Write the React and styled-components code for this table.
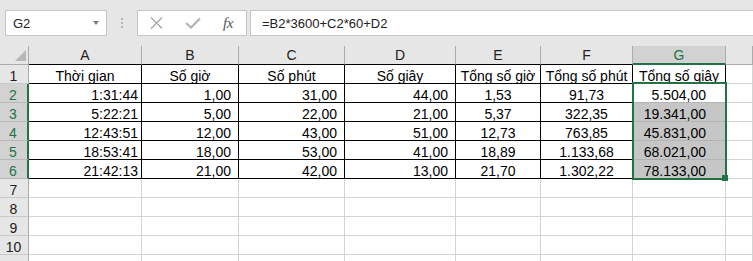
import styled, { createGlobalStyle } from 'styled-components';

const GlobalStyle = createGlobalStyle`
  html, body { margin: 0; padding: 0; background: #fff; }
  body { font-family: "Liberation Sans", Arial, sans-serif; }
`

const GREEN = '#217346'
const HEAD = '#e6e6e6'
const HEAD_ON = '#d2d2d2'
const GRID = '#d4d4d4'

const columns = ['A', 'B', 'C', 'D', 'E', 'F', 'G']
const titles = ['Thời gian', 'Số giờ', 'Số phút', 'Số giây', 'Tổng số giờ', 'Tổng số phút', 'Tổng số giây']
const data = [
  ['1:31:44', '1,00', '31,00', '44,00', '1,53', '91,73', '5.504,00'],
  ['5:22:21', '5,00', '22,00', '21,00', '5,37', '322,35', '19.341,00'],
  ['12:43:51', '12,00', '43,00', '51,00', '12,73', '763,85', '45.831,00'],
  ['18:53:41', '18,00', '53,00', '41,00', '18,89', '1.133,68', '68.021,00'],
  ['21:42:13', '21,00', '42,00', '13,00', '21,70', '1.302,22', '78.133,00'],
]
// how each column lines its values up
const layout = [
  {align: 'right', pad: 3},
  {align: 'right', pad: 7},
  {align: 'right', pad: 7},
  {align: 'right', pad: 7},
  {align: 'center', pad: 0},
  {align: 'center', pad: 0},
  {align: 'right', pad: 19},
]
const emptyRows = [7, 8, 9, 10, 11, 12]

export default function App() {
  return <Window>
    <GlobalStyle />
    <FormulaBar>
      <NameBox>
        <span>G2</span>
        <Caret />
      </NameBox>
      <Grip><i /><i /><i /></Grip>
      <ButtonBox>
        <svg width="13" height="12" viewBox="0 0 13 12">
          <path d="M1 0.5 L12 11.5 M12 0.5 L1 11.5" stroke="#a9a9a9" strokeWidth="1.4" fill="none" />
        </svg>
        <svg width="16" height="12" viewBox="0 0 16 12">
          <path d="M1 6 L6 10.5 L15 1.5" stroke="#b4b4b4" strokeWidth="2.2" fill="none" />
        </svg>
        <Fx>fx</Fx>
      </ButtonBox>
      <FormulaInput>=B2*3600+C2*60+D2</FormulaInput>
    </FormulaBar>

    <Sheet>
      <Corner><Triangle /></Corner>
      {columns.map((c, i) => <ColHead key={c} $on={c === 'G'} $boxed={i < 6}>{c}</ColHead>)}
      <ColHead />

      <RowHead>1</RowHead>
      {titles.map(t => <Cell key={t} $align="center" $line="#000">{t}</Cell>)}
      <Cell />

      {data.map((row, r) => [
        <RowHead key={'h' + r} $on>{r + 2}</RowHead>,
        ...row.map((v, i) => <Cell
          key={r + '-' + i}
          $align={layout[i].align}
          $pad={layout[i].pad}
          $line={i < 6 ? '#000' : '#b4b4b4'}
          $shade={i === 6 && r > 0}
          $gridRow={i === 6 ? r + 3 : null}
        >{v}</Cell>),
        <Cell key={'x' + r} />,
      ])}

      {emptyRows.map(n => [
        <RowHead key={'h' + n}>{n}</RowHead>,
        ...columns.map(c => <Cell key={n + c} />),
        <Cell key={'x' + n} />,
      ])}

      <Selection><Handle /></Selection>
    </Sheet>
  </Window>
}

const Window = styled.div`
  width: 753px;
  height: 261px;
  overflow: hidden;
  background: #fff;
`

const FormulaBar = styled.div`
  display: flex;
  align-items: flex-start;
  height: 46px;
  box-sizing: border-box;
  padding: 10px 0 0 5px;
  background: ${HEAD};
  font-size: 13px;
  color: #222;
`
const Box = styled.div`
  display: flex;
  align-items: center;
  height: 26px;
  box-sizing: border-box;
  background: #fff;
  border: 1px solid #c6c6c6;
`
const NameBox = styled(Box)`
  width: 102px;
  justify-content: space-between;
  padding: 0 7px 0 7px;
`
const Caret = styled.span`
  width: 0;
  height: 0;
  border-left: 3px solid transparent;
  border-right: 3px solid transparent;
  border-top: 4px solid #7a7a7a;
`
const Grip = styled.div`
  display: flex;
  flex-flow: column;
  row-gap: 2px;
  margin: 8px 14px 0 14px;
  i {
    display: block;
    width: 2px;
    height: 2px;
    background: #b4b4b4;
  }
`
const ButtonBox = styled(Box)`
  width: 110px;
  padding-left: 12px;
  svg:nth-child(2) { margin-left: 22px; }
`
const Fx = styled.span`
  margin-left: 22px;
  font-family: "Liberation Serif", "Times New Roman", serif;
  font-style: italic;
  font-size: 15px;
  color: #555;
  letter-spacing: -0.5px;
`
const FormulaInput = styled(Box)`
  flex: 1;
  margin: 0 -10px 0 3px;
  padding-left: 11px;
`

const Sheet = styled.div`
  display: grid;
  grid-template-columns: 29px 113px 97px 106px 111px 85px 92px 93px 1fr;
  grid-auto-rows: 19px;
  font-size: 14px;
`
const Corner = styled.div`
  position: relative;
  background: ${HEAD};
  border-right: 1px solid #ababab;
  border-bottom: 1px solid #ababab;
`
const Triangle = styled.div`
  position: absolute;
  right: 2px;
  bottom: 3px;
  width: 0;
  height: 0;
  border-left: 11px solid transparent;
  border-bottom: 11px solid #b7b7b7;
`
const ColHead = styled.div`
  display: flex;
  align-items: flex-end;
  justify-content: center;
  line-height: 14px;
  box-sizing: border-box;
  color: ${p => p.$on ? GREEN : '#222'};
  background: ${p => p.$on ? HEAD_ON : HEAD};
  border-right: 1px solid #ababab;
  border-bottom: ${p => p.$on ? `2px solid ${GREEN}` : `1px solid ${p.$boxed ? '#000' : '#ababab'}`};
  padding-bottom: ${p => p.$on ? 1 : 2}px;
`
const RowHead = styled.div`
  display: flex;
  align-items: flex-end;
  justify-content: center;
  line-height: 14px;
  padding-right: 1px;
  box-sizing: border-box;
  color: ${p => p.$on ? GREEN : '#222'};
  background: ${p => p.$on ? HEAD_ON : HEAD};
  border-right: ${p => p.$on ? `2px solid ${GREEN}` : '1px solid #ababab'};
  border-bottom: 1px solid ${p => p.$on ? '#b8b8b8' : '#c9c9c9'};
`
const Cell = styled.div`
  display: flex;
  align-items: flex-end;
  justify-content: ${p => p.$align === 'right' ? 'flex-end' : p.$align === 'center' ? 'center' : 'flex-start'};
  padding-right: ${p => p.$pad || 0}px;
  line-height: 14px;
  white-space: nowrap;
  color: #000;
  background: ${p => p.$shade ? '#c6c6c6' : '#fff'};
  border-right: 1px solid ${p => p.$line || GRID};
  border-bottom: 1px solid ${p => p.$line || GRID};
  ${p => p.$gridRow ? `grid-row: ${p.$gridRow}; grid-column: 8;` : ''}
`
const Selection = styled.div`
  grid-column: 8 / 9;
  grid-row: 3 / 8;
  margin: -2px -1px -1px -1px;
  position: relative;
  border: 2px solid ${GREEN};
  pointer-events: none;
`
const Handle = styled.div`
  position: absolute;
  right: -3px;
  bottom: -3px;
  width: 6px;
  height: 6px;
  background: ${GREEN};
`
